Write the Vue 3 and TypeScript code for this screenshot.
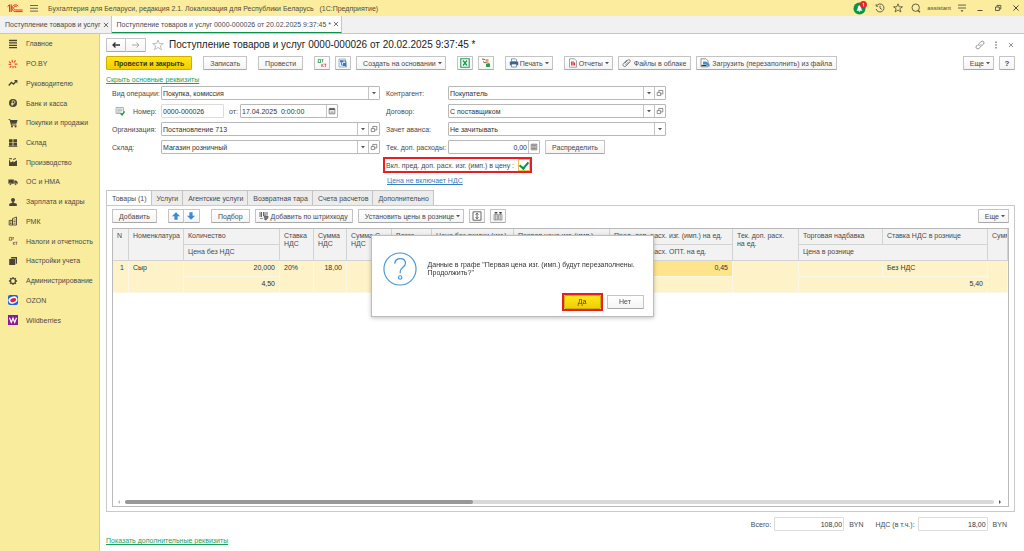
<script setup lang="ts">
import { ref } from 'vue'

interface Section { icon: string; title: string }

const sections: Section[] = [
  { icon: 'list', title: 'Главное' },
  { icon: 'spark', title: 'PO.BY' },
  { icon: 'trend', title: 'Руководителю' },
  { icon: 'coin', title: 'Банк и касса' },
  { icon: 'cart', title: 'Покупки и продажи' },
  { icon: 'boxes', title: 'Склад' },
  { icon: 'factory', title: 'Производство' },
  { icon: 'truck', title: 'ОС и НМА' },
  { icon: 'person', title: 'Зарплата и кадры' },
  { icon: 'register', title: 'РМК' },
  { icon: 'percent', title: 'Налоги и отчетность' },
  { icon: 'books', title: 'Настройки учета' },
  { icon: 'gear', title: 'Администрирование' },
  { icon: 'ozon', title: 'OZON' },
  { icon: 'wb', title: 'Wildberries' },
]

const pages = ['Товары (1)', 'Услуги', 'Агентские услуги', 'Возвратная тара', 'Счета расчетов', 'Дополнительно']
const activePage = ref(0)

const docTitle = 'Поступление товаров и услуг 0000-000026 от 20.02.2025 9:37:45 *'
const operation = ref('Покупка, комиссия')
const docNumber = ref('0000-000026')
const docDate = ref('17.04.2025  0:00:00')
const organization = ref('Постановление 713')
const warehouse = ref('Магазин розничный')
const partner = ref('Покупатель')
const contract = ref('С поставщиком')
const advance = ref('Не зачитывать')
const extraCosts = ref('0,00')
const includeCosts = ref(true)
const total = ref('108,00')
const vat = ref('18,00')
const dialogOpen = ref(true)
</script>

<template>
  <div class="app">
    <svg class="sprite" aria-hidden="true">
      <symbol id="list" viewBox="0 0 10 10"><path d="M1 1.5h8M1 3.9h8M1 6.3h8M1 8.7h8" stroke="#4a4437" stroke-width="1.3" /></symbol>
      <symbol id="spark" viewBox="0 0 10 10"><path d="M4 1l.6 2.4M7.5 1.2L6 3.6M1 2.5l2 1.6M.6 5.4h2.6M1.6 8.6l1.8-1.8M5 9.2V7M8 8.6L6.6 6.8M9.4 5.2H6.8" stroke="#e8502e" stroke-width="1.2" fill="none" /></symbol>
      <symbol id="trend" viewBox="0 0 10 10"><path d="M.7 7.5L3.5 4.5 5.5 6 8.4 3" stroke="#4a4437" stroke-width="1.4" fill="none" /><path d="M6 2h3.4v3.4z" fill="#4a4437" /></symbol>
      <symbol id="coin" viewBox="0 0 10 10"><circle cx="5" cy="5" r="4" fill="#4a4437" /><path d="M4.2 7.8V2.8h1.4a1.3 1.3 0 0 1 0 2.7H3.2M3.2 6.6h2.4" stroke="#faec9d" stroke-width=".8" fill="none" /></symbol>
      <symbol id="cart" viewBox="0 0 10 10"><path d="M.5 1h1.6l.4 1H9.6L8.4 5.8H3.6l.2.8h4.6v.8H3L1.6 1.8H.5z" fill="#4a4437" /><circle cx="4" cy="8.5" r="1" fill="#4a4437" /><circle cx="7.6" cy="8.5" r="1" fill="#4a4437" /></symbol>
      <symbol id="boxes" viewBox="0 0 10 10"><path d="M1 1.2h3.6v3.2H1zM5.4 1.2H9v3.2H5.4zM1 5h3.6v2.8H1zM5.4 5H9v2.8H5.4zM.6 8.2h8.8V9H.6z" fill="#4a4437" /></symbol>
      <symbol id="factory" viewBox="0 0 10 10"><path d="M1 9V3.6l.8-.6.8 2.4L5.4 4v1.4L9 3.2V9zM1 1.2h3v1H1zM5 2l3-1v1L5 3z" fill="#4a4437" /></symbol>
      <symbol id="truck" viewBox="0 0 10 10"><path d="M.4 2.4h5.4v4.4H.4zM6.3 3.4h1.9l1.5 1.8v1.6H6.3z" fill="#4a4437" /><circle cx="2.4" cy="7.1" r="1.1" fill="#4a4437" stroke="#faec9d" stroke-width=".4" /><circle cx="7.6" cy="7.1" r="1.1" fill="#4a4437" stroke="#faec9d" stroke-width=".4" /></symbol>
      <symbol id="person" viewBox="0 0 10 10"><circle cx="5" cy="3" r="2" fill="#4a4437" /><path d="M4.2 4.6h1.6v1.2l3 1V9H1.2V6.8l3-1z" fill="#4a4437" /></symbol>
      <symbol id="register" viewBox="0 0 10 10"><path d="M1.2 4.4h3.3V9H1.2zM4.5 2.6L8.5 1v8h-4z" stroke="#4a4437" stroke-width=".9" fill="none" /><path d="M5.6 4h2M5.6 5.6h2M5.6 7.2h2M2 6h1.6M2 7.5h1.6" stroke="#4a4437" stroke-width=".8" /></symbol>
      <symbol id="percent" viewBox="0 0 10 10"><path d="M.8 4.2h3.4M1.4 4V1.4h2.2V4M5 1.6v2.3M4.400 1.6h1.600M5.4 6v2.800M7 6L5.600 7.300 7 8.800M7.400 6.200h2M8.400 6.200v2.600" stroke="#6a6350" stroke-width=".8" fill="none" /></symbol>
      <symbol id="books" viewBox="0 0 10 10"><path d="M3.4 1H9v6.4L7.8 8V2.4H2.600zM1.2 2.900h6V9h-6z" fill="#4a4437" /></symbol>
      <symbol id="gear" viewBox="0 0 10 10"><circle cx="5" cy="5" r="2.5" fill="none" stroke="#4a4437" stroke-width="1.2" /><path d="M5 .9v1.500M5 7.600v1.500M.9 5h1.500M7.600 5h1.500M2.100 2.100l1 1M6.900 6.900l1 1M2.100 7.900l1-1M6.900 3.100l1-1" stroke="#4a4437" stroke-width="1.3" /></symbol>
      <symbol id="ozon" viewBox="0 0 10 10"><rect width="10" height="10" rx="2" fill="#1763e8" /><ellipse cx="5" cy="5" rx="4.6" ry="3.5" fill="#fff" transform="rotate(-20 5 5)" /><ellipse cx="5.2" cy="5.2" rx="3" ry="1.9" fill="#ee1c3c" transform="rotate(-15 5 5)" /></symbol>
      <symbol id="wb" viewBox="0 0 10 10"><rect width="10" height="10" fill="#8a1a96" /><path d="M1.5 2.8l1.8 4.6L5 3.2l1.7 4.2 1.8-4.6" stroke="#fff" stroke-width="1.2" fill="none" /></symbol>

      <symbol id="logo" viewBox="0 0 16 10"><path d="M.6 3.600L2.600 1.800V9M4.200 9V1.400" stroke="#e2231a" stroke-width="1" fill="none" /><path d="M11.200 3.300A3.400 3.400 0 1 0 8.400 8.600H15.600M9.900 4.200A1.800 1.800 0 1 0 8.400 7H15.600" stroke="#e2231a" stroke-width=".9" fill="none" /></symbol>
      <symbol id="burger" viewBox="0 0 10 10"><path d="M1 2.500h8M1 5.300h8M1 8.100h8" stroke="#5f5a45" stroke-width=".9" /></symbol>
      <symbol id="bell" viewBox="0 0 14 14"><circle cx="6.500" cy="7.500" r="6" fill="#0a9447" /><path d="M3.500 9.800c1-.8 1-1.800 1.200-3.200C5 5 5.800 4.400 6.500 4.400s1.500.6 1.800 2.200c.2 1.400.2 2.400 1.200 3.200zM5.600 10.300h1.800l-.9 1z" fill="#fff" /><circle cx="10.400" cy="3.600" r="3.500" fill="#e5202b" /><path d="M9.500 2.900l1.100-.9v3.400" stroke="#fff" stroke-width=".8" fill="none" /></symbol>
      <symbol id="history" viewBox="0 0 10 10"><path d="M1.600 2.800A4 4 0 1 1 1.100 6M1.200 1.200v2h2M5 2.700v2.500l1.900 1.300" stroke="#55503f" stroke-width=".9" fill="none" /></symbol>
      <symbol id="star" viewBox="0 0 10 10"><path d="M5 .8l1.200 3H9.500L6.900 5.700 7.900 9 5 7 2.100 9l1-3.300L.500 3.800h3.300z" stroke="currentColor" stroke-width=".8" fill="none" /></symbol>
      <symbol id="search" viewBox="0 0 10 10"><circle cx="4.700" cy="4.700" r="3.700" stroke="#55503f" stroke-width=".9" fill="none" /><path d="M6.800 7.300l2.200 2" stroke="#55503f" stroke-width="1.200" /></symbol>
      <symbol id="menu" viewBox="0 0 10 10"><path d="M1 2.100h8M1 5h8" stroke="#55503f" stroke-width=".9" /><path d="M3.500 7.300h3L5 9z" fill="#55503f" /></symbol>
      <symbol id="min" viewBox="0 0 10 10"><path d="M2.500 7.500h5" stroke="#55503f" /></symbol>
      <symbol id="restore" viewBox="0 0 10 10"><path d="M2.500 4h3.800v3.500H2.500zM4 3.800V2.400h3.800V6H6.500" stroke="#55503f" stroke-width=".9" fill="none" /></symbol>
      <symbol id="close" viewBox="0 0 10 10"><path d="M2.400 2.400l5.200 5.200M7.600 2.400L2.400 7.600" stroke="currentColor" stroke-width="1" /></symbol>
      <symbol id="back" viewBox="0 0 10 10"><path d="M9 5H2M4.500 2.500L2 5l2.500 2.500" stroke="#333" stroke-width="1.300" fill="none" /></symbol>
      <symbol id="forward" viewBox="0 0 10 10"><path d="M1 5h7M5.500 2.500L8 5 5.500 7.500" stroke="#aaa" stroke-width="1" fill="none" /></symbol>
      <symbol id="link" viewBox="0 0 10 10"><path d="M4.200 6a1.900 1.900 0 0 1 .1-2.600L6 1.700a1.700 1.700 0 0 1 2.500 2.400L7.200 5.400M5.800 4.200a1.900 1.900 0 0 1-.1 2.500L4 8.300A1.700 1.700 0 0 1 1.500 5.900L2.800 4.600" stroke="#777" stroke-width=".8" fill="none" /></symbol>
      <symbol id="dots" viewBox="0 0 10 10"><path d="M4.300 1.500h1.400v1.400H4.300zM4.300 4.300h1.400v1.400H4.300zM4.300 7.100h1.400v1.400H4.300z" fill="#777" /></symbol>

      <symbol id="caret" viewBox="0 0 6 6"><path d="M1 2h4L3 4.300z" fill="#555" /></symbol>
      <symbol id="open" viewBox="0 0 10 10"><path d="M1.500 4.500h4.300v3.700H1.500zM3.500 4.300V1.800h5v4.400H6" stroke="#666" stroke-width=".9" fill="none" /></symbol>
      <symbol id="calendar" viewBox="0 0 10 10"><path d="M1.500 2.200h7v6.300h-7z" stroke="#555" stroke-width=".9" fill="none" /><path d="M1.500 2h7v1.800h-7zM3 .8h1v1.400H3zM6 .8h1v1.400H6z" fill="#555" /><path d="M3 5.300h4M3 6.900h4" stroke="#888" stroke-width=".8" /></symbol>
      <symbol id="calc" viewBox="0 0 10 10"><path d="M1.500 1.500h7v7h-7z" stroke="#666" stroke-width=".9" fill="#ddd" /><path d="M2.600 3h4.800M2.600 5h4.800M2.600 6.800h4.800" stroke="#666" stroke-width=".9" /></symbol>
      <symbol id="posted" viewBox="0 0 10 10"><path d="M1 1.500h7.500v6H1z" fill="#eef1f4" stroke="#8a959f" stroke-width=".7" /><path d="M2.200 3.200h5M2.200 4.700h5M2.200 6.200h3" stroke="#8a959f" stroke-width=".6" /><path d="M5.500 7.200l1.600 1.700L9.600 5.500" stroke="#1a9a4a" stroke-width="1.300" fill="none" /></symbol>
      <symbol id="dtkt" viewBox="0 0 10 10"><path d="M.7 4.500h3.400M1.300 4.200V1.400h2.200v2.800M4.500 1.700h2M5.500 1.700v2.600" stroke="#2a9b58" stroke-width=".8" fill="none" /><path d="M4.800 6v3M6.600 6L5 7.400 6.600 9M7.300 6.200h2.200M8.400 6.200V9" stroke="#e04848" stroke-width=".8" fill="none" /></symbol>
      <symbol id="structure" viewBox="0 0 10 10"><path d="M1 1h6.500v8H1z" fill="#e9f0f8" stroke="#7d9dbf" stroke-width=".7" /><path d="M2 2.200h3.500v2H2zM5 5h3.500v3H5z" fill="#3f76b5" /><path d="M3.500 4v3H5M5.500 3h2.400v2M7 7.500l2 1.700" stroke="#3f76b5" stroke-width=".8" fill="none" /></symbol>
      <symbol id="excel" viewBox="0 0 10 10"><path d="M.8.8h8.400v8.400H.8z" fill="#fff" stroke="#1c9b52" stroke-width="1.100" /><path d="M3 2.500l4 5M7 2.500l-4 5" stroke="#1c9b52" stroke-width="1.400" /></symbol>
      <symbol id="exchange" viewBox="0 0 10 10"><path d="M1 1l3 .5M2 3.500L4 5" stroke="#555" stroke-width=".9" /><path d="M4.500 1.200h3v2.500h-3z" fill="#e79b3d" /><path d="M5 6h4v3H5z" fill="#2a9b58" /><path d="M4 4.500l4.500 1" stroke="#c33" stroke-width=".9" /></symbol>
      <symbol id="printer" viewBox="0 0 10 10"><path d="M2.500.8h4l1 1v2h-5z" fill="#fff" stroke="#4d6e91" stroke-width=".7" /><path d="M.8 3.600h8.400v3.600H.8z" fill="#3d638d" /><path d="M2.500 6h5v3h-5z" fill="#fff" stroke="#4d6e91" stroke-width=".7" /></symbol>
      <symbol id="report" viewBox="0 0 10 10"><path d="M1.500.8h5l2 2v6.400h-7z" fill="#fff" stroke="#8a8f96" stroke-width=".8" /><path d="M3.500 3.500v4" stroke="#2a9b58" stroke-width="1" /><path d="M5 3.200v4.300M6.500 4.500v3" stroke="#d33" stroke-width="1.200" /></symbol>
      <symbol id="clip" viewBox="0 0 10 10"><path d="M2.500 5.500l3.400-3.400a1.300 1.300 0 0 1 2 2L4 8A1.800 1.800 0 0 1 1.400 5.500L5 1.900M3.500 7l3.200-3.200" stroke="#666" stroke-width=".8" fill="none" /></symbol>
      <symbol id="upload" viewBox="0 0 10 10"><path d="M1 .8h5l2 2v6H1z" fill="#fff" stroke="#6c7b8a" stroke-width=".8" /><path d="M3 3.500h3l3.500 2.500v3L6 6.500H3z" fill="#4b8fd2" /><path d="M1.500 7.500h5" stroke="#333" stroke-width="1.200" /></symbol>
      <symbol id="up" viewBox="0 0 10 10"><path d="M5 1.200L9 5.200H6.600v3.600H3.400V5.200H1z" fill="#3c8ad8" /></symbol>
      <symbol id="down" viewBox="0 0 10 10"><path d="M5 8.800L1 4.800h2.400V1.200h3.200v3.600H9z" fill="#3c8ad8" /></symbol>
      <symbol id="barcode" viewBox="0 0 10 10"><path d="M1 1v5M2.500 1v5M4.500 1v4M6 1v4M8 1v3" stroke="#555" stroke-width=".9" /><path d="M5 5h4v2L7 9H6zM1 7.500h3" fill="#777" stroke="#555" stroke-width=".6" /></symbol>
      <symbol id="rowheight" viewBox="0 0 10 10"><path d="M1 .8h8v8.400H1z" fill="#fff" stroke="#555" stroke-width=".9" /><path d="M5 2.500v5M3.600 3.600L5 2.200l1.400 1.400M3.600 6.400L5 7.800l1.400-1.400" stroke="#444" stroke-width=".9" fill="none" /></symbol>
      <symbol id="kits" viewBox="0 0 10 10"><path d="M1 3.500h3.500V9H1zM5.500 3.500H9V9H5.500zM2.700 3.500V9M7.200 3.500V9" fill="#ddd" stroke="#777" stroke-width=".6" /><path d="M1.500 1.800h3M6 1.800h3M3 1v1.600M7.500 1v1.600" stroke="#333" stroke-width="1" /></symbol>
    </svg>

    <header class="topbar">
      <svg class="logo"><use href="#logo" /></svg>
      <button class="bare" aria-label="Меню"><svg class="icon"><use href="#burger" /></svg></button>
      <span class="app-title">Бухгалтерия для Беларуси, редакция 2.1. Локализация для Республики Беларусь &nbsp; (1С:Предприятие)</span>
      <div class="system">
        <button class="bare" aria-label="Уведомления"><svg class="bell"><use href="#bell" /></svg></button>
        <button class="bare" aria-label="История"><svg class="icon"><use href="#history" /></svg></button>
        <button class="bare" aria-label="Избранное"><svg class="icon"><use href="#star" /></svg></button>
        <button class="bare" aria-label="Поиск"><svg class="icon"><use href="#search" /></svg></button>
      </div>
      <span class="user">assistant</span>
      <div class="window-controls">
        <button class="bare" aria-label="Настройка"><svg class="icon"><use href="#menu" /></svg></button>
        <button class="bare" aria-label="Свернуть"><svg class="icon"><use href="#min" /></svg></button>
        <button class="bare" aria-label="Восстановить"><svg class="icon"><use href="#restore" /></svg></button>
        <button class="bare" aria-label="Закрыть"><svg class="icon"><use href="#close" /></svg></button>
      </div>
    </header>

    <nav class="open-tabs">
      <div class="open-tab"><a href="#">Поступление товаров и услуг</a><button class="bare" aria-label="Закрыть вкладку"><svg class="icon small"><use href="#close" /></svg></button></div>
      <div class="open-tab current"><a href="#">{{ docTitle }}</a><button class="bare" aria-label="Закрыть вкладку"><svg class="icon small"><use href="#close" /></svg></button></div>
    </nav>

    <div class="body">
      <nav class="sidebar">
        <ul>
          <li v-for="s in sections" :key="s.title">
            <a href="#"><svg class="icon"><use :href="'#' + s.icon" /></svg>{{ s.title }}</a>
          </li>
        </ul>
      </nav>

      <main class="document">
        <div class="heading">
          <div class="btn-group">
            <button class="btn nav" aria-label="Назад"><svg class="icon"><use href="#back" /></svg></button>
            <button class="btn nav" aria-label="Вперед"><svg class="icon"><use href="#forward" /></svg></button>
          </div>
          <button class="bare favourite" aria-label="В избранное"><svg class="star"><use href="#star" /></svg></button>
          <h1>{{ docTitle }}</h1>
          <div class="heading-tools">
            <button class="bare" aria-label="Ссылка"><svg class="icon"><use href="#link" /></svg></button>
            <button class="bare" aria-label="Еще"><svg class="icon"><use href="#dots" /></svg></button>
            <button class="bare" aria-label="Закрыть"><svg class="icon small"><use href="#close" /></svg></button>
          </div>
        </div>

        <div class="toolbar">
          <button class="btn primary wide">Провести и закрыть</button>
          <button class="btn apart">Записать</button>
          <button class="btn apart">Провести</button>
          <button class="btn square apart" aria-label="Проводки"><svg class="icon"><use href="#dtkt" /></svg></button>
          <button class="btn square" aria-label="Структура подчиненности"><svg class="icon"><use href="#structure" /></svg></button>
          <button class="btn drop">Создать на основании<svg class="caret"><use href="#caret" /></svg></button>
          <button class="btn square apart" aria-label="Excel"><svg class="icon"><use href="#excel" /></svg></button>
          <button class="btn square" aria-label="Обмен"><svg class="icon"><use href="#exchange" /></svg></button>
          <button class="btn with-icon drop apart"><svg class="icon"><use href="#printer" /></svg>Печать<svg class="caret"><use href="#caret" /></svg></button>
          <button class="btn with-icon drop apart"><svg class="icon"><use href="#report" /></svg>Отчеты<svg class="caret"><use href="#caret" /></svg></button>
          <button class="btn with-icon"><svg class="icon"><use href="#clip" /></svg>Файлы в облаке</button>
          <button class="btn with-icon"><svg class="icon"><use href="#upload" /></svg>Загрузить (перезаполнить) из файла</button>
          <button class="btn drop end">Еще<svg class="caret"><use href="#caret" /></svg></button>
          <button class="btn square strong">?</button>
        </div>

        <a class="green-link" href="#">Скрыть основные реквизиты</a>

        <div class="form">
          <div class="form-column">
            <div class="row">
              <label for="operation">Вид операции:</label>
              <div class="field">
                <select id="operation" v-model="operation"><option>Покупка, комиссия</option></select>
                <span class="cell"><svg class="caret"><use href="#caret" /></svg></span>
              </div>
            </div>
            <div class="row">
              <label for="number" class="number-label"><svg class="icon"><use href="#posted" /></svg>Номер:</label>
              <div class="field number"><input id="number" v-model="docNumber" type="text" /></div>
              <label for="date" class="date-label">от:</label>
              <div class="field date">
                <input id="date" v-model="docDate" type="text" />
                <button class="cell" aria-label="Календарь"><svg class="icon small"><use href="#calendar" /></svg></button>
              </div>
            </div>
            <div class="row">
              <label for="organization">Организация:</label>
              <div class="field">
                <input id="organization" v-model="organization" type="text" />
                <button class="cell" aria-label="Выбрать"><svg class="caret"><use href="#caret" /></svg></button>
                <button class="cell" aria-label="Открыть"><svg class="icon small"><use href="#open" /></svg></button>
              </div>
            </div>
            <div class="row">
              <label for="warehouse">Склад:</label>
              <div class="field">
                <input id="warehouse" v-model="warehouse" type="text" />
                <button class="cell" aria-label="Выбрать"><svg class="caret"><use href="#caret" /></svg></button>
                <button class="cell" aria-label="Открыть"><svg class="icon small"><use href="#open" /></svg></button>
              </div>
            </div>
          </div>

          <div class="form-column second">
            <div class="row">
              <label for="partner">Контрагент:</label>
              <div class="field">
                <input id="partner" v-model="partner" type="text" />
                <button class="cell" aria-label="Выбрать"><svg class="caret"><use href="#caret" /></svg></button>
                <button class="cell" aria-label="Открыть"><svg class="icon small"><use href="#open" /></svg></button>
              </div>
            </div>
            <div class="row">
              <label for="contract">Договор:</label>
              <div class="field">
                <input id="contract" v-model="contract" type="text" />
                <button class="cell" aria-label="Выбрать"><svg class="caret"><use href="#caret" /></svg></button>
                <button class="cell" aria-label="Открыть"><svg class="icon small"><use href="#open" /></svg></button>
              </div>
            </div>
            <div class="row">
              <label for="advance">Зачет аванса:</label>
              <div class="field">
                <select id="advance" v-model="advance"><option>Не зачитывать</option></select>
                <span class="cell"><svg class="caret"><use href="#caret" /></svg></span>
              </div>
            </div>
            <div class="row">
              <label for="costs">Тек. доп. расходы:</label>
              <div class="field costs">
                <input id="costs" v-model="extraCosts" class="amount" type="text" />
                <button class="cell" aria-label="Калькулятор"><svg class="icon small"><use href="#calc" /></svg></button>
              </div>
              <button class="btn distribute">Распределить</button>
            </div>
            <label class="include">Вкл. пред. доп. расх. изг. (имп.) в цену :<input v-model="includeCosts" type="checkbox" /></label>
            <a class="blue-link" href="#">Цена не включает НДС</a>
          </div>
        </div>

        <div class="page-tabs" role="tablist">
          <button
            v-for="(p, i) in pages"
            :key="p"
            role="tab"
            :aria-selected="i === activePage"
            :class="{ active: i === activePage }"
            @click="activePage = i"
          >{{ p }}</button>
        </div>

        <section class="panel">
          <div class="toolbar">
            <button class="btn">Добавить</button>
            <div class="btn-group apart">
              <button class="btn square" aria-label="Вверх"><svg class="icon"><use href="#up" /></svg></button>
              <button class="btn square" aria-label="Вниз"><svg class="icon"><use href="#down" /></svg></button>
            </div>
            <button class="btn apart">Подбор</button>
            <button class="btn with-icon"><svg class="icon"><use href="#barcode" /></svg>Добавить по штрихкоду</button>
            <button class="btn drop">Установить цены в рознице<svg class="caret"><use href="#caret" /></svg></button>
            <button class="btn square" aria-label="Высота строк"><svg class="icon"><use href="#rowheight" /></svg></button>
            <button class="btn square" aria-label="Комплекты"><svg class="icon"><use href="#kits" /></svg></button>
            <button class="btn drop end">Еще<svg class="caret"><use href="#caret" /></svg></button>
          </div>

          <div class="grid">
            <table>
              <colgroup>
                <col class="w16" /><col class="w55" /><col class="w96" /><col class="w34" /><col class="w33" /><col class="w45" />
                <col class="w40" /><col class="w82" /><col class="w96" /><col class="w123" /><col class="w66" /><col class="w84" /><col class="w105" /><col />
              </colgroup>
              <thead>
                <tr>
                  <th rowspan="2">N</th>
                  <th rowspan="2">Номенклатура</th>
                  <th>Количество</th>
                  <th rowspan="2">Ставка НДС</th>
                  <th rowspan="2">Сумма НДС</th>
                  <th rowspan="2">Сумма С НДС</th>
                  <th rowspan="2">Всего</th>
                  <th>Цена без скидки (изг.)</th>
                  <th>Первая цена изг. (имп.)</th>
                  <th>Пред. доп. расх. изг. (имп.) на ед.</th>
                  <th rowspan="2">Тек. доп. расх. на&nbsp;ед.</th>
                  <th>Торговая надбавка</th>
                  <th>Ставка НДС в рознице</th>
                  <th rowspan="2">Сумма</th>
                </tr>
                <tr>
                  <th>Цена без НДС</th>
                  <th></th>
                  <th></th>
                  <th>Пред. доп. расх. ОПТ. на ед.</th>
                  <th colspan="2">Цена в рознице</th>
                </tr>
              </thead>
              <tbody>
                <tr>
                  <td rowspan="2" class="num">1</td>
                  <td rowspan="2">Сыр</td>
                  <td class="num">20,000</td>
                  <td rowspan="2">20%</td>
                  <td rowspan="2" class="num">18,00</td>
                  <td rowspan="2"></td>
                  <td rowspan="2"></td>
                  <td></td>
                  <td></td>
                  <td class="num selected">0,45</td>
                  <td rowspan="2"></td>
                  <td></td>
                  <td>Без НДС</td>
                  <td rowspan="2"></td>
                </tr>
                <tr>
                  <td class="num">4,50</td>
                  <td></td>
                  <td></td>
                  <td></td>
                  <td colspan="2" class="num">5,40</td>
                </tr>
              </tbody>
            </table>
            <div class="scroll">
              <span class="scroll-arrow left"></span>
              <div class="track"><div class="thumb"></div></div>
              <span class="scroll-arrow right"></span>
            </div>
          </div>
        </section>

        <div class="totals">
          <label for="total">Всего:</label>
          <div class="field sum"><input id="total" v-model="total" class="amount" type="text" readonly /></div>
          <span class="currency">BYN</span>
          <label for="vat" class="vat-label">НДС (в т.ч.):</label>
          <div class="field sum"><input id="vat" v-model="vat" class="amount" type="text" readonly /></div>
          <span class="currency">BYN</span>
        </div>
        <a class="green-link bottom" href="#">Показать дополнительные реквизиты</a>
      </main>
    </div>

    <div v-if="dialogOpen" class="overlay">
      <div class="dialog" role="dialog" aria-label="Вопрос">
        <div class="message">
          <svg class="question" viewBox="0 0 36 36">
            <circle cx="18" cy="18" r="17" fill="none" stroke="#4a96d2" stroke-width="1.200" />
            <path d="M12.500 12.500c0-3.500 2.500-5.500 5.700-5.500 3.300 0 5.600 2 5.600 4.800 0 4.200-5.600 4.600-5.600 9v1.700" fill="none" stroke="#4a96d2" stroke-width="1.300" />
            <circle cx="18.200" cy="27" r="1.800" fill="none" stroke="#4a96d2" stroke-width="1.200" />
          </svg>
          <p>Данные в графе "Первая цена изг. (имп.) будут перезаполнены.<br />Продолжить?"</p>
        </div>
        <div class="answers">
          <div class="marked"><button class="btn primary" @click="dialogOpen = false">Да</button></div>
          <button class="btn" @click="dialogOpen = false">Нет</button>
        </div>
      </div>
    </div>
  </div>
</template>

<style>
body {
  margin: 0;
  background: #fff;
}
</style>

<style scoped>
.app {
  display: flex;
  flex-direction: column;
  min-height: 100vh;
  font: 7px/9px "Liberation Sans", Arial, sans-serif;
  color: #4a4a4a;
}
.app * { box-sizing: border-box; }
.sprite { display: none; }
button, input, select { font: inherit; color: inherit; }
a { color: inherit; text-decoration: none; }
svg { flex: none; display: block; }
.icon { width: 10px; height: 10px; }
.icon.small { width: 8px; height: 8px; }
.caret { width: 6px; height: 6px; }
.bare { display: flex; padding: 0; border: 0; background: none; }

.topbar {
  display: flex;
  align-items: center;
  height: 16px;
  padding: 0 3px 0 7px;
  background: #fbec9e;
  color: #514c39;
}
.logo { width: 16px; height: 10px; margin-right: 6px; }
.app-title { margin-left: 9px; white-space: nowrap; }
.system { display: flex; align-items: center; gap: 8px; margin-left: auto; }
.bell { width: 14px; height: 14px; }
.user { margin: 0 6px; font-size: 6px; }
.window-controls { display: flex; gap: 8px; }

.open-tabs {
  display: flex;
  height: 18px;
  background: #f1f1f1;
  border-bottom: 1px solid #c6c6c6;
}
.open-tab {
  display: flex;
  align-items: center;
  gap: 1px;
  padding: 0 1px 0 5px;
  white-space: nowrap;
  border-right: 1px solid #c6c6c6;
}
.open-tab.current { background: #fff; border-bottom: 1px solid #0a9447; }

.body { display: flex; flex: 1; }
.sidebar { width: 100px; flex: none; background: #faec9d; border-right: 1px solid #d9cf96; }
.sidebar ul {
  display: grid;
  grid-auto-rows: 1fr;
  height: 296px;
  margin: 0;
  padding: 0;
  list-style: none;
}
.sidebar a { display: flex; align-items: center; gap: 8px; height: 100%; padding-left: 8px; white-space: nowrap; }

.document { display: flex; flex-direction: column; flex: 1; min-width: 0; padding: 4px 9px 6px 6px; }
.heading { display: flex; align-items: center; height: 14px; }
h1 { margin: 0 0 0 5px; font-size: 10px; line-height: 14px; font-weight: 400; color: #222; white-space: nowrap; }
.favourite { margin-left: 6px; color: #bbb; }
.star { width: 12px; height: 12px; }
.heading-tools { display: flex; align-items: center; gap: 6px; margin-left: auto; color: #777; }

.toolbar { display: flex; gap: 5px; margin-top: 4px; }
.btn {
  display: flex;
  align-items: center;
  justify-content: center;
  height: 14px;
  padding: 0 6px;
  white-space: nowrap;
  background: linear-gradient(#fff, #f4f4f4);
  border: 1px solid #c4c4c4;
  border-bottom-color: #a8a8a8;
  border-radius: 1px;
}
.btn.primary { background: linear-gradient(#ffe61a, #f2cf00); border-color: #cdb000; color: #3d3610; }
.btn.wide { padding: 0 7px; font-weight: 700; }
.btn.square { width: 16px; padding: 0; }
.btn.nav { width: 20px; padding: 0; }
.btn.with-icon { padding: 0 4px 0 3px; gap: 2px; }
.btn.drop { padding-right: 2px; gap: 1px; }
.btn.strong { font-weight: 700; font-size: 8px; }
.apart { margin-left: 6px; }
.end { margin-left: auto; }
.btn-group { display: flex; }
.btn-group .btn + .btn { border-left: 0; }

.green-link { align-self: flex-start; margin-top: 5px; color: #1ba05b; text-decoration: underline; }
.blue-link { color: #3a7cc0; text-decoration: underline; align-self: flex-start; margin-left: 4px; }

.form { display: flex; gap: 3px; margin-top: 2px; padding-left: 6px; }
.form-column { display: flex; flex-direction: column; gap: 4px; width: 268px; }
.form-column.second { width: 284px; }
.row { display: flex; align-items: center; height: 14px; }
.row > label { width: 49px; white-space: nowrap; flex: none; }
.second .row { padding-left: 3px; }
.second .row > label { width: 62px; }
.field { display: flex; flex: 1; height: 14px; min-width: 0; background: #fff; border: 1px solid #b8b8b8; border-radius: 1px; color: #333; }
.second .field { flex: 0 0 218px; }
.field input, .field select {
  flex: 1;
  width: 0;
  min-width: 0;
  margin: 0;
  padding: 0 1px;
  border: 0;
  outline: 0;
  background: none;
  appearance: none;
}
.field .amount { text-align: right; }
.cell {
  display: flex;
  align-items: center;
  justify-content: center;
  width: 11px;
  padding: 0;
  border: 0;
  border-left: 1px solid #c4c4c4;
  background: none;
}
.row > .number-label { display: flex; align-items: center; gap: 8px; padding-left: 3px; }
.field.number { flex: 0 0 63px; border-color: #dcdcdc; }
.row > .date-label { width: 16px; padding-left: 5px; }
.field.date { flex: 0 0 98px; }
.second .field.costs { flex: 0 0 92px; }
.distribute { width: 60px; margin-left: 5px; padding: 0; }
.include {
  display: flex;
  align-items: center;
  align-self: flex-start;
  width: 149px;
  height: 16px;
  justify-content: space-between;
  padding: 0 0 0 1px;
  border: 2px solid #ea1c24;
  white-space: nowrap;
  margin: -1px 0;
}
.include input {
  display: grid;
  place-items: center;
  width: 12px;
  height: 12px;
  margin: 0;
  appearance: none;
  background: #fff;
  border: 1px solid #e3c65a;
}
.include input:checked::after {
  content: "";
  width: 4px;
  height: 7px;
  margin-bottom: 2px;
  border: solid #0a9447;
  border-width: 0 2px 2px 0;
  transform: rotate(40deg);
}

.page-tabs { display: flex; margin-top: 5px; }
.page-tabs button {
  height: 15px;
  padding: 0 4px 0 5px;
  background: #ececec;
  border: 1px solid #c4c4c4;
  border-left-width: 0;
  border-bottom: 0;
  white-space: nowrap;
}
.page-tabs button.active { background: #fff; border-left-width: 1px; }
.panel {
  display: flex;
  flex-direction: column;
  flex: 1;
  padding: 0 5px 4px;
  border: 1px solid #c9c9c9;
}
.panel .toolbar { margin-top: 3px; }
.grid {
  display: flex;
  flex-direction: column;
  flex: 1;
  margin-top: 5px;
  border: 1px solid #b9b9b9;
}
table { width: 100%; table-layout: fixed; border-collapse: separate; border-spacing: 0; }
.w16 { width: 16px; }
.w33 { width: 33px; }
.w34 { width: 34px; }
.w40 { width: 40px; }
.w45 { width: 45px; }
.w55 { width: 55px; }
.w66 { width: 66px; }
.w82 { width: 82px; }
.w84 { width: 84px; }
.w96 { width: 96px; }
.w105 { width: 105px; }
.w123 { width: 123px; }
th, td {
  padding: 3px 4px 0;
  font-weight: 400;
  line-height: 8px;
  text-align: left;
  vertical-align: top;
  overflow: hidden;
}
th { height: 16px; background: #f2f2f2; border-right: 1px solid #d3d3d3; border-bottom: 1px solid #d3d3d3; }
thead tr:first-child th:not([rowspan]) { white-space: nowrap; }
td { height: 16px; background: #fef2c8; color: #333; border-right: 1px solid #fbf7e6; border-bottom: 1px solid #fbf7e6; }
.num { text-align: right; }
.selected { background: #ffe48c; }
.scroll { display: flex; align-items: center; gap: 5px; margin-top: auto; padding: 2px 5px 2px 3px; }
.track { flex: 1; height: 4px; border-radius: 2px; background: #d9d9d9; }
.thumb { width: 40%; height: 4px; border-radius: 2px; background: #989898; }
.scroll-arrow { border: 2px solid transparent; }
.scroll-arrow.left { border-right-color: #bbb; }
.scroll-arrow.right { border-left-color: #555; }

.totals { display: flex; align-items: center; justify-content: flex-end; margin-top: 5px; padding-right: 8px; }
.field.sum { flex: 0 0 70px; margin: 0 5px 0 3px; border-color: #dcdcdc; }
.vat-label { margin-left: 12px; }
.green-link.bottom { margin-top: 5px; }

.overlay { position: fixed; inset: 0; display: flex; align-items: center; justify-content: center; }
.dialog {
  width: 283px;
  padding: 16px 9px 5px 11px;
  background: #fff;
  border: 1px solid #bdbdbd;
  box-shadow: 0 1px 4px rgba(0, 0, 0, 0.25);
}
.message { display: flex; gap: 11px; align-items: center; }
.question { width: 34px; height: 34px; }
.message p { margin: 0; line-height: 8px; color: #333; white-space: nowrap; }
.answers { display: flex; align-items: center; justify-content: flex-end; gap: 4px; margin-top: 7px; }
.answers .btn { width: 37px; padding: 0; }
.marked { border: 2px solid #ea1c24; }
</style>
